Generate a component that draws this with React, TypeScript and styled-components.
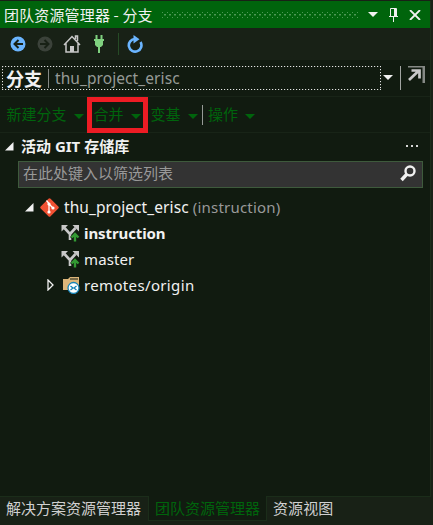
import React from "react";
import styled, { createGlobalStyle } from "styled-components";

const Global = createGlobalStyle`
  * { box-sizing: border-box; }
  html, body { margin: 0; background: #182116; }
  body { overflow: hidden; }
  svg { display: block; flex: none; }
`;

const Panel = styled.main`
  width: 433px;
  height: 525px;
  display: flex;
  flex-direction: column;
  padding-top: 1px;
  background: #182116;
  color: #f1f1f1;
  font-family: "Noto Sans", "Noto Sans CJK SC", sans-serif;
  font-size: 15px;
  white-space: pre;
`;

const Body = styled.div`
  width: 431px;
  height: 496px;
  border-right: 1px solid #1b2d1a;
  border-bottom: 1px solid #1b2d1a;
  background: #111b10;
  display: flex;
  flex-direction: column;
`;

const Label = styled.span<{ $color?: string; $bold?: boolean; $size?: number; $spacing?: number; $cjk?: boolean }>`
  color: ${(p) => p.$color ?? "#f1f1f1"};
  font-family: ${(p) => (p.$cjk ? '"Noto Sans CJK SC"' : '"Noto Sans", "Noto Sans CJK SC"')}, sans-serif;
  font-weight: ${(p) => (p.$bold ? 700 : 400)};
  font-size: ${(p) => p.$size ?? 15}px;
  letter-spacing: ${(p) => p.$spacing ?? 0}px;
  line-height: 22px;
  flex: none;
`;

const TitleBar = styled.header`
  height: 27px;
  flex: none;
  display: flex;
  align-items: center;
  padding: 0 9px 0 4px;
  background: #00640c;
`;

const Grip = styled.svg`
  width: 196px;
  height: 6px;
  margin: 0 10px 0 9px;
`;

const WindowButtons = styled.div`
  display: flex;
  align-items: center;
  margin-left: auto;
`;

const Toolbar = styled.div`
  height: 32px;
  flex: none;
  display: flex;
  align-items: center;
  padding: 0 0 1px 10px;
  background: #182116;
`;

const Separator = styled.div<{ $h: number; $color: string }>`
  width: 1px;
  height: ${(p) => p.$h}px;
  flex: none;
  background: ${(p) => p.$color};
`;

const PageHeader = styled.div`
  height: 37px;
  flex: none;
  display: flex;
  align-items: flex-start;
  padding: 6px 0 0 2px;
  border-bottom: 1px solid #182417;
`;

const PagePicker = styled.div`
  width: 379px;
  height: 24px;
  display: flex;
  align-items: center;
  padding-left: 4px;
  background:
    repeating-linear-gradient(90deg, #e4e6e4 0 1px, #394139 1px 2px, transparent 2px 3px) 0 0 / 100% 1px no-repeat,
    repeating-linear-gradient(90deg, #e4e6e4 0 1px, #394139 1px 2px, transparent 2px 3px) 0 100% / 100% 1px no-repeat,
    repeating-linear-gradient(180deg, #e4e6e4 0 1px, #394139 1px 2px, transparent 2px 3px) 0 0 / 1px 100% no-repeat,
    repeating-linear-gradient(180deg, #e4e6e4 0 1px, #394139 1px 2px, transparent 2px 3px) 100% 0 / 1px 100% no-repeat;
`;

const Actions = styled.nav`
  height: 36px;
  flex: none;
  display: flex;
  align-items: center;
  padding-left: 6.5px;
  border-bottom: 1px solid #182417;
`;

const Action = styled.div<{ $w: number }>`
  position: relative;
  width: ${(p) => p.$w}px;
  height: 30px;
  display: flex;
  align-items: center;
  gap: 7px;
  padding-bottom: 2px;
`;

const Highlight = styled.i`
  position: absolute;
  left: -6.5px;
  top: -3px;
  width: 61px;
  height: 36px;
  border: 5px solid #ed1c24;
`;

const SectionTitle = styled.div`
  height: 28px;
  flex: none;
  display: flex;
  align-items: center;
  justify-content: space-between;
  padding: 0 12px 2px 5px;
`;

const SectionName = styled.div`
  display: flex;
  align-items: center;
  gap: 7px;
`;

const Search = styled.div`
  width: 405px;
  height: 27px;
  flex: none;
  margin: 0 0 6px 18px;
  display: flex;
  align-items: center;
  justify-content: space-between;
  padding: 0 6px 3px 4px;
  background: #333;
  border: 1px solid #3e5a3c;
`;

const TreeRow = styled.div<{ $indent: number; $gap?: number }>`
  height: 26px;
  flex: none;
  display: flex;
  align-items: center;
  padding-left: ${(p) => p.$indent}px;
  gap: ${(p) => p.$gap ?? 5}px;
`;

const Tabs = styled.footer`
  display: flex;
  height: 24px;
`;

const Tab = styled.div<{ $w: number; $active?: boolean }>`
  width: ${(p) => p.$w}px;
  height: 24px;
  margin-top: ${(p) => (p.$active ? -1 : 0)}px;
  padding-left: 6px;
  padding-top: ${(p) => (p.$active ? 1 : 0)}px;
  ${(p) => p.$active && "height: 25px; background: #111b10; border: 1px solid #1b2d1a; border-top: 0;"}
`;

const Spaced = styled.span<{ $top?: number; $left?: number }>`
  padding-top: ${(p) => p.$top ?? 0}px;
  margin-left: ${(p) => p.$left ?? 0}px;
  flex: none;
`;

const Caret = ({ color = "#f1f1f1" }: { color?: string }) => (
  <svg width="10" height="5" viewBox="0 0 10 5"><path d="M0 0h10L5 5z" fill={color} /></svg>
);

const Expanded = () => (
  <svg width="9" height="9" viewBox="0 0 9 9"><path d="M8.5 0v8.5H0z" fill="#f1f1f1" /></svg>
);

const NavArrow = ({ color, back }: { color: string; back?: boolean }) => (
  <svg width="16" height="16" viewBox="0 0 16 16">
    <circle cx="8" cy="8" r="7.5" fill={color} />
    <path d={back ? "M13 8H4.500M8.500 4L4.500 8l4 4" : "M3 8h8.500M7.500 4l4 4-4 4"} fill="none" stroke="#182116" strokeWidth="2" />
  </svg>
);

const Branch = () => (
  <svg width="19" height="18" viewBox="0 0 19 18">
    <path d="M9 16V10L3.500 4M9 10l5.500-6" fill="none" stroke="#c8c8c8" strokeWidth="2.600" />
    <path d="M0.500 1H7L0.500 7.500zM11.500 1H18v6.500z" fill="#c8c8c8" />
    <path d="M14 8l5 5-1.500 1.500L15.500 13v5h-3v-5l-2 1.500L9 13z" fill="#111b10" />
    <path d="M14 17.500V11M10.500 13.500L14 10l3.500 3.500" fill="none" stroke="#339933" strokeWidth="2.400" />
  </svg>
);

export default function App() {
  const green = "#00640c";
  return (
    <Panel>
      <Global />
      <Body>
        <TitleBar>
          <Label $cjk $spacing={0.15}>团队资源管理器 - 分支</Label>
          <Grip>
            <defs>
              <pattern id="grip" width="5" height="6" patternUnits="userSpaceOnUse">
                <path d="M0 0h1v1H0zM2 2h2v1H2zM0 5h1v1H0z" fill="#4b9853" />
                <path d="M2 3h2v1H2z" fill="#267b2f" />
              </pattern>
            </defs>
            <rect width="196" height="6" fill="url(#grip)" />
          </Grip>
          <WindowButtons>
            <Caret />
            <Spaced $left={11}>
              <svg width="9" height="14" viewBox="0 0 9 14">
                <path d="M1.500 8.500V.5h6v8M0 8.500h9M4.500 9v5" fill="none" stroke="#f1f1f1" />
                <path d="M5 0h2v8H5z" fill="#f1f1f1" />
              </svg>
            </Spaced>
            <Spaced $left={11}>
              <svg width="12" height="10" viewBox="0 0 12 10"><path d="M1 0l10 10M11 0L1 10" stroke="#f1f1f1" strokeWidth="1.800" /></svg>
            </Spaced>
          </WindowButtons>
        </TitleBar>
        <Toolbar>
          <NavArrow color="#6bb5ff" back />
          <Spaced $left={11}><NavArrow color="#3b423a" /></Spaced>
          <Spaced $left={10}>
            <svg width="18" height="18" viewBox="0 0 18 18">
              <path d="M1 10L9 1.500 17 10M3 8.500V17h12V8.500M12.500 4V1h2v5" fill="none" stroke="#c8c8c8" strokeWidth="1.500" />
              <path d="M7 11h4v6H7z" fill="#c8c8c8" />
            </svg>
          </Spaced>
          <Spaced $left={13}>
            <svg width="10" height="18" viewBox="0 0 10 18">
              <path d="M1.500 0h2v4h3V0h2v4H10v2H9v4L7 12H6v6H4v-6H3L1 10V6H0V4h1.500z" fill="#7fd17f" />
            </svg>
          </Spaced>
          <Spaced $left={14}><Separator $h={22} $color="#264b26" /></Spaced>
          <Spaced $left={8}>
            <svg width="16" height="18" viewBox="0 0 16 18">
              <path d="M13.500 7A6.300 6.300 0 1 1 8 4" fill="none" stroke="#6bb5ff" strokeWidth="2.600" />
              <path d="M6.500 0L12.500 4.200 6.500 8.500z" fill="#6bb5ff" />
            </svg>
          </Spaced>
        </Toolbar>
        <PageHeader>
          <PagePicker>
            <Label $bold $cjk $size={18}>分支</Label>
            <Spaced $left={6}><Separator $h={19} $color="#858985" /></Spaced>
            <Spaced $left={6}><Label $color="#969a96" $size={15.500} $spacing={0.08}>thu_project_erisc</Label></Spaced>
          </PagePicker>
          <Spaced $top={9} $left={2}><Caret /></Spaced>
          <Spaced $left={7}><Separator $h={24} $color="#a2a5a2" /></Spaced>
          <Spaced $left={6}>
            <svg width="18" height="19" viewBox="0 0 18 19">
              <path d="M1 0h16v17" fill="none" stroke="#858985" strokeWidth="3" />
              <path d="M2 14L12 4.500M4.500 4.500h8v8" fill="none" stroke="#c8c8c8" strokeWidth="2.700" />
            </svg>
          </Spaced>
        </PageHeader>
        <Actions>
          <Action $w={87}><Label $cjk $color={green}>新建分支</Label><Spaced $top={5}><Caret color={green} /></Spaced></Action>
          <Action $w={57}><Label $cjk $color={green}>合并</Label><Spaced $top={5}><Caret color={green} /></Spaced><Highlight /></Action>
          <Action $w={51.5}><Label $cjk $color={green}>变基</Label><Spaced $top={5}><Caret color={green} /></Spaced></Action>
          <Separator $h={20} $color="#969a96" />
          <Spaced $left={5}><Action $w={60}><Label $cjk $color={green}>操作</Label><Spaced $top={5}><Caret color={green} /></Spaced></Action></Spaced>
        </Actions>
        <SectionTitle>
          <SectionName><Expanded /><Label $bold $size={15}>活动 GIT 存储库</Label></SectionName>
          <svg width="12" height="2" viewBox="0 0 12 2"><path d="M0 0h2v2H0zM5 0h2v2H5zM10 0h2v2h-2z" fill="#d5d5d5" /></svg>
        </SectionTitle>
        <Search>
          <Label $cjk $color="#999">在此处键入以筛选列表</Label>
          <svg width="16" height="17" viewBox="0 0 16 17">
            <circle cx="10" cy="6" r="4.500" fill="none" stroke="#f1f1f1" strokeWidth="2.400" />
            <path d="M7 9L1.500 15" stroke="#f1f1f1" strokeWidth="3.400" />
          </svg>
        </Search>
        <TreeRow $indent={25} $gap={5}>
          <Expanded />
          <svg width="21" height="21" viewBox="0 0 21 21">
            <rect x="3.500" y="3.500" width="14" height="14" rx="1.500" transform="rotate(45 10.500 10.500)" fill="#f05133" />
            <path d="M7.500 3.500l2.500 3v9M10 7l4 4" fill="none" stroke="#fff" strokeWidth="1.300" />
            <circle cx="10" cy="7" r="1.600" fill="#fff" /><circle cx="10" cy="15" r="1.600" fill="#fff" /><circle cx="14" cy="11" r="1.600" fill="#fff" />
          </svg>
          <Spaced $left={-1}>
            <Label $size={15.500} $spacing={0.08}>thu_project_erisc <Label $color="#999" $size={15} $spacing={0.2}>(instruction)</Label></Label>
          </Spaced>
        </TreeRow>
        <TreeRow $indent={61} $gap={4}><Branch /><Label $bold $spacing={-0.1}>instruction</Label></TreeRow>
        <TreeRow $indent={61} $gap={4}><Branch /><Label $spacing={0.1}>master</Label></TreeRow>
        <TreeRow $indent={47} $gap={8}>
          <svg width="7" height="12" viewBox="0 0 7 12"><path d="M1 1v10l5-5z" fill="none" stroke="#f1f1f1" strokeWidth="1.300" /></svg>
          <svg width="18" height="18" viewBox="0 0 18 18">
            <path d="M1 3h5l2-2h9v13H1z" fill="#dcb67a" />
            <path d="M8 3h8" stroke="#111b10" />
            <circle cx="11.500" cy="12" r="5.500" fill="#fff" stroke="#1684b8" strokeWidth="1.300" />
            <path d="M8.500 10l2.500 2-2.500 2M14.500 10L12 12l2.500 2" fill="none" stroke="#1684b8" strokeWidth="1.300" />
          </svg>
          <Spaced $left={-4}><Label $spacing={0.35}>remotes/origin</Label></Spaced>
        </TreeRow>
      </Body>
      <Tabs>
        <Tab $w={148}><Label $cjk $color="#d0d0d0">解决方案资源管理器</Label></Tab>
        <Tab $w={119} $active><Label $cjk $color={green}>团队资源管理器</Label></Tab>
        <Tab $w={160}><Label $cjk $color="#d0d0d0" $spacing={0.1}>资源视图</Label></Tab>
      </Tabs>
    </Panel>
  );
}
